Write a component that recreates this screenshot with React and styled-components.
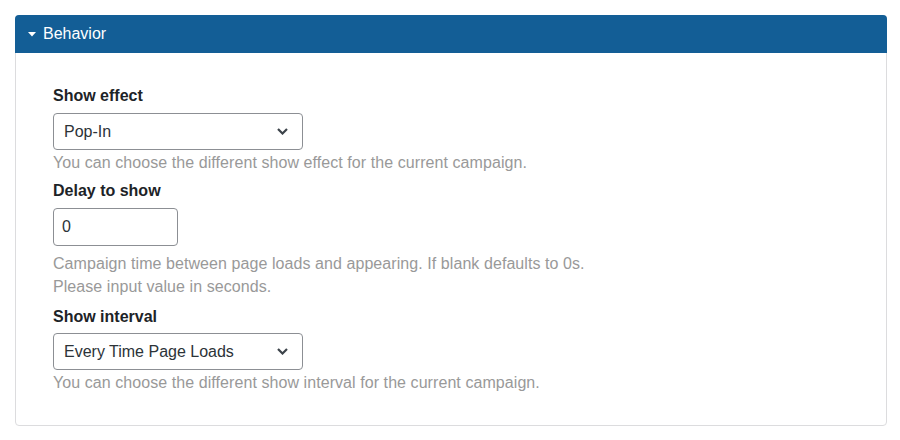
import React from "react";
import styled, { createGlobalStyle } from "styled-components";

const GlobalStyle = createGlobalStyle`
  html, body { margin: 0; padding: 0; background: #ffffff; }
  body { font-family: "Liberation Sans", Arial, sans-serif; font-size: 16px; color: #1d2327; }
  * { box-sizing: border-box; }
`;

const Page = styled.div`
  padding: 15px 13px 15px 15px;
`;

const Panel = styled.section`
  width: 872px;
  border: 1px solid #dcdcde;
  border-radius: 4px;
  background: #fff;
`;

const PanelHeader = styled.div`
  display: flex;
  align-items: center;
  gap: 7px;
  height: 38px;
  margin: -1px -1px 0 -1px;
  padding: 0 12px 0 13px;
  background: #135e96;
  color: #fff;
  border-radius: 4px 4px 0 0;
  font-size: 16px;
  line-height: 1;
`;

const PanelBody = styled.div`
  padding: 31px 37px 31px 37px;
  display: flex;
  flex-direction: column;
`;

const Field = styled.div`
  display: flex;
  flex-direction: column;
  align-items: flex-start;
  margin-top: ${(p) => p.$top || 0}px;
`;

const Label = styled.label`
  font-weight: bold;
  font-size: 16px;
  line-height: 23px;
  color: #1d2327;
  margin-bottom: ${(p) => p.$gap ?? 6}px;
`;

const SelectWrap = styled.div`
  position: relative;
  width: 250px;
`;

const Select = styled.select`
  appearance: none;
  -webkit-appearance: none;
  width: 100%;
  height: 37px;
  padding: 0 32px 0 10px;
  border: 1px solid #8c8f94;
  border-radius: 4px;
  background: #fff;
  font-family: "Liberation Sans", Arial, sans-serif;
  font-size: 16px;
  color: #2c3338;
  outline: none;
`;

const Chevron = styled.svg`
  position: absolute;
  right: 15px;
  top: 15px;
  pointer-events: none;
`;

const Input = styled.input`
  width: 125px;
  height: 38px;
  padding: 0 8px;
  border: 1px solid #8c8f94;
  border-radius: 4px;
  font-family: "Liberation Sans", Arial, sans-serif;
  font-size: 16px;
  color: #2c3338;
  outline: none;
`;

const Help = styled.p`
  margin: ${(p) => p.$top}px 0 0 0;
  font-size: 16px;
  line-height: 23px;
  color: #999999;
  letter-spacing: 0.07px;
`;

function ChevronIcon() {
  return (
    <Chevron width="11" height="7" viewBox="0 0 11 7">
      <path d="M1 1 L5.5 5.5 L10 1" fill="none" stroke="#3c434a" strokeWidth="2.2" />
    </Chevron>
  );
}

function SelectField({ value, options }) {
  return (
    <SelectWrap>
      <Select defaultValue={value}>
        {options.map((o) => (
          <option key={o}>{o}</option>
        ))}
      </Select>
      <ChevronIcon />
    </SelectWrap>
  );
}

export default function App() {
  return (
    <>
      <GlobalStyle />
      <Page>
        <Panel>
          <PanelHeader>
            <svg width="8" height="5" viewBox="0 0 8 5">
              <path d="M0 0 L8 0 L4 4.5 Z" fill="#fff" />
            </svg>
            <span>Behavior</span>
          </PanelHeader>
          <PanelBody>
            <Field>
              <Label>Show effect</Label>
              <SelectField value="Pop-In" options={["Pop-In", "Fade-In", "Slide-In"]} />
              <Help $top={1}>You can choose the different show effect for the current campaign.</Help>
            </Field>
            <Field $top={5}>
              <Label>Delay to show</Label>
              <Input defaultValue="0" />
              <Help $top={6}>
                Campaign time between page loads and appearing. If blank defaults to 0s.
                <br />
                Please input value in seconds.
              </Help>
            </Field>
            <Field $top={7}>
              <Label $gap={5}>Show interval</Label>
              <SelectField
                value="Every Time Page Loads"
                options={["Every Time Page Loads", "Once Per Session", "Once Per Day"]}
              />
              <Help $top={1}>You can choose the different show interval for the current campaign.</Help>
            </Field>
          </PanelBody>
        </Panel>
      </Page>
    </>
  );
}
